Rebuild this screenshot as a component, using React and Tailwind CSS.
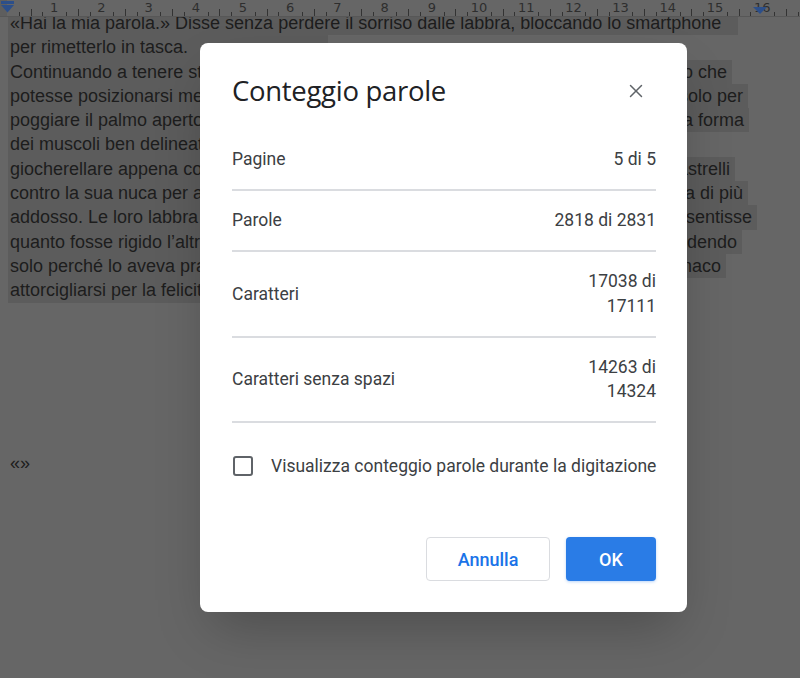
import { X } from 'lucide-react';

// ── Document lines (each row keeps its own selection highlight) ───────────────
const LINES = [
  { left: '«Hai la mia parola.» Disse senza perdere il sorriso dalle labbra, bloccando lo smartphone', w: 'w-[730px]' },
  { left: 'per rimetterlo in tasca.', w: 'w-[320px]' },
  { left: 'Continuando a tenere stretto il telefono, si', right: 'in modo che', w: 'w-[724px]' },
  { left: 'potesse posizionarsi meglio sul divano', right: 'e non solo per', w: 'w-[740px]' },
  { left: 'poggiare il palmo aperto sul suo petto', right: 'sentirne la forma', w: 'w-[741px]' },
  { left: 'dei muscoli ben delineati sotto la stoffa.', w: 'w-[520px]' },
  { left: 'giocherellare appena con i capelli', right: 'come rastrelli', w: 'w-[727px]' },
  { left: 'contro la sua nuca per attirarlo', right: 'ancora di più', w: 'w-[740px]' },
  { left: 'addosso. Le loro labbra si sfiorarono', right: 'e che sentisse', w: 'w-[749px]' },
  { left: 'quanto fosse rigido l’altro', right: 'sorridendo', w: 'w-[734px]' },
  { left: 'solo perché lo aveva praticamente', right: 'stomaco', w: 'w-[718px]' },
  { left: 'attorcigliarsi per la felicità.', w: 'w-[420px]' },
];

const STATS = [
  { label: 'Pagine', value: '5 di 5' },
  { label: 'Parole', value: '2818 di 2831' },
  { label: 'Caratteri', value: '17038 di 17111' },
  { label: 'Caratteri senza spazi', value: '14263 di 14324' },
];

// ── Ruler ─────────────────────────────────────────────────────────────────────
function Ruler() {
  const cm = 47.2;
  const x0 = 7;
  const ticks = [];
  for (let q = 1; q < 17 * 4; q++) {
    if (q % 4 === 0) continue;
    const x = Math.round(x0 + (q * cm) / 4) + 0.5;
    if (x > 800) break;
    const long = q % 4 === 2;
    ticks.push(<line key={q} x1={x} x2={x} y1={long ? 9 : 12} y2={16} stroke="#333" strokeWidth="1" />);
  }
  return (
    <svg width="800" height="17" className="block relative z-10 bg-[#666]">
      <rect x="0" y="0" width="7" height="17" fill="#5e5e5e" />
      <line x1="0" x2="800" y1="16.5" y2="16.5" stroke="#575757" strokeWidth="1" />
      {ticks}
      {Array.from({ length: 16 }, (_, i) => i + 1).map((n) => (
        <text key={n} x={x0 + n * cm} y="11.5" textAnchor="middle" fontSize="13"
          fontFamily="'DejaVu Sans', sans-serif" fill="#2e2e2e">{n}</text>
      ))}
      {/* indent markers */}
      <rect x="1" y="1" width="13" height="3" fill="#2c4f8a" />
      <path d="M1 5 H14 L7.5 12.5 Z" fill="#2c4f8a" />
      <path d="M753 7 H767 L760 14 Z" fill="#2c4f8a" />
    </svg>
  );
}

// ── Word count dialog ─────────────────────────────────────────────────────────
function WordCountDialog() {
  return (
    <div className="absolute left-[200px] top-[43px] w-[487px] bg-white rounded-lg shadow-2xl pl-8 pr-[31px] pt-7 pb-[31px] font-['Roboto',sans-serif]">
      <div className="flex items-center justify-between h-10">
        <h2 className="text-[27.5px] leading-8 text-[#202124] font-['Open_Sans',sans-serif] tracking-[-0.3px]">Conteggio parole</h2>
        <button className="w-10 h-10 flex items-center justify-center text-[#5f6368]">
          <X size={22} strokeWidth={1.6} />
        </button>
      </div>

      <div className="mt-[19px]">
        {STATS.map(({ label, value }) => (
          <div key={label} className="flex items-center justify-between py-[17.25px] border-b-2 border-[#dadce0] text-[17.5px] leading-[24.5px] text-[#3c4043]">
            <span>{label}</span>
            <span className="max-w-[112px] text-right">{value}</span>
          </div>
        ))}
      </div>

      <label className="mt-[31px] h-6 flex items-center gap-[18px]">
        <span className="shrink-0 w-[20px] h-[20px] border-2 border-[#5f6368] rounded-[3px] ml-[1px]" />
        <span className="whitespace-nowrap text-[17.5px] text-[#3c4043]">Visualizza conteggio parole durante la digitazione</span>
      </label>

      <div className="mt-[59px] flex justify-end gap-4">
        <button className="w-[124px] h-11 rounded border border-[#dadce0] text-[#1a73e8] text-[18px] font-medium">Annulla</button>
        <button className="w-[90px] h-11 rounded bg-[#2a7ce6] text-white text-[18px] font-medium shadow-[0_1px_3px_rgba(26,115,232,0.3)]">OK</button>
      </div>
    </div>
  );
}

export default function App() {
  return (
    <div className="relative w-[800px] h-[678px] overflow-hidden bg-[#666] font-['Liberation_Sans',Arial,sans-serif]">
      <Ruler />
      <div className="-mt-[6px] text-[18px] leading-[24.3px] text-[#1d1d1d]">
        {LINES.map((l, i) => (
          <div key={i} className="h-[24.3px] pl-[8px]">
            <span className={`inline-flex justify-between whitespace-nowrap bg-[#5c5c5c] pl-[2px] pr-[5px] ${l.w}`}>
              <span>{l.left}</span>
              {l.right && <span>{l.right}</span>}
            </span>
          </div>
        ))}
        <div className="mt-[148px] pl-[10px]">«»</div>
      </div>
      <WordCountDialog />
    </div>
  );
}
